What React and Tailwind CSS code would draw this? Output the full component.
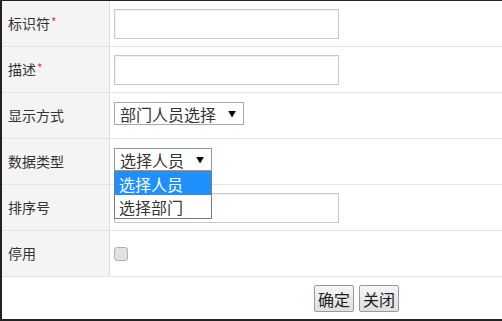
const font = { fontFamily: '"Noto Sans CJK SC", "Noto Sans", sans-serif' }

function Row({ label, required, children }) {
  return (
    <div className="grid grid-cols-[108px_1fr] h-[46px] border-b border-[#e4e4e4]">
      <div className="flex items-center pl-[6px] bg-[#f4f4f4] border-r border-[#dcdcdc] text-[14px] text-[#333]">
        {label}
        {required && <span className="text-[#e4393c] text-[12px] ml-[1px] -mt-1">*</span>}
      </div>
      <div className="relative flex items-center pl-[4px]">{children}</div>
    </div>
  )
}

function TextBox() {
  return <div className="w-[225px] h-[30px] border border-[#c8c8c8] bg-white shadow-[inset_1px_1px_1px_rgba(0,0,0,0.06)]" />
}

function FakeSelect({ value, width, focused }) {
  return (
    <div
      className={`flex items-center justify-between h-[23px] bg-white pl-[5px] pr-[7px] text-[16px] text-[#333] leading-none border ${
        focused ? 'border-[#7f9db9]' : 'border-[#a9a9a9]'
      } ${width}`}
    >
      <span>{value}</span>
      <span className="text-[8px] text-black ml-2">▼</span>
    </div>
  )
}

export default function App() {
  return (
    <div className="w-[502px] h-[321px] bg-white overflow-hidden" style={font}>
      <div className="border-t border-l-2 border-b-2 border-[#222] h-[321px] flex flex-col">
        <Row label="标识符" required>
          <TextBox />
        </Row>
        <Row label="描述" required>
          <TextBox />
        </Row>
        <Row label="显示方式">
          <div className="-mt-[4px]">
            <FakeSelect value="部门人员选择" width="w-[130px]" />
          </div>
        </Row>
        <Row label="数据类型">
          <div className="-mt-[4px]">
            <FakeSelect value="选择人员" width="w-[98px]" focused />
          </div>
          {/* open option list */}
          <div className="absolute left-[4px] top-[32px] z-10 w-[98px] bg-white border border-[#7a7a7a] text-[16px] leading-none">
            <div className="h-[23px] flex items-center pl-[4px] bg-[#1e90ff] text-white">选择人员</div>
            <div className="h-[23px] flex items-center pl-[4px] text-[#333]">选择部门</div>
          </div>
        </Row>
        <Row label="排序号">
          <TextBox />
        </Row>
        <Row label="停用">
          <div className="w-[14px] h-[14px] rounded-[3px] border border-[#b0b0b0] bg-[#e2e2e2]" />
        </Row>
        <div className="flex-1 flex items-center gap-[5px] pl-[312px] pt-[1px]">
          <button className="h-[27px] px-[3px] border border-[#9a9a9a] rounded-[2px] bg-gradient-to-b from-[#f6f6f6] to-[#dedede] text-[16px] text-[#222] leading-none">
            确定
          </button>
          <button className="h-[27px] px-[3px] border border-[#9a9a9a] rounded-[2px] bg-gradient-to-b from-[#f6f6f6] to-[#dedede] text-[16px] text-[#222] leading-none">
            关闭
          </button>
        </div>
      </div>
    </div>
  )
}
